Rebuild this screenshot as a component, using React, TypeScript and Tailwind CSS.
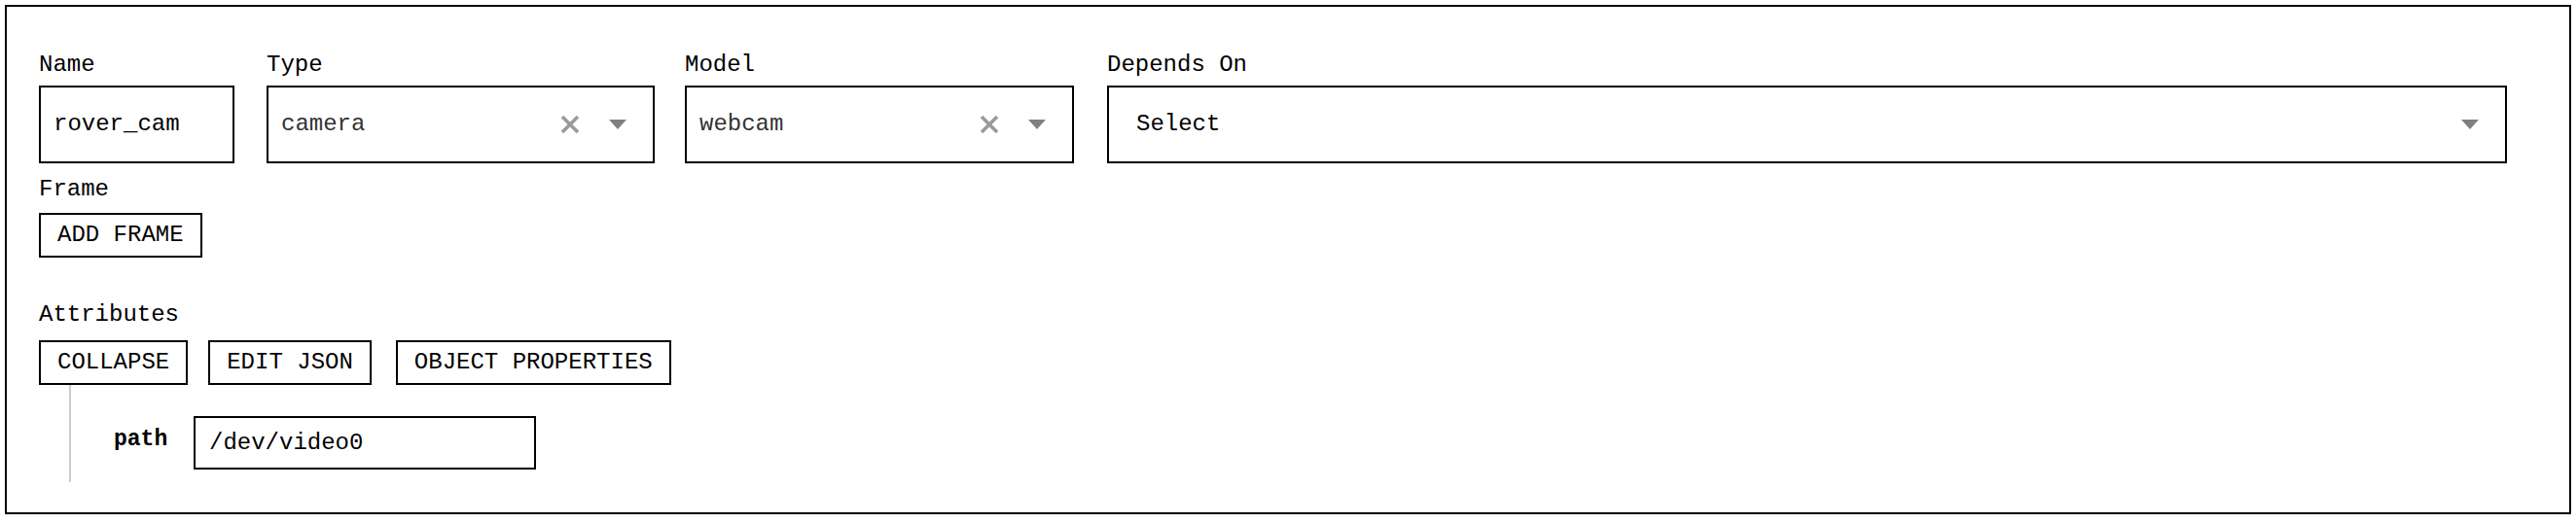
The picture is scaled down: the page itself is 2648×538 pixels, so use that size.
import React from "react";

const mono = "font-['Liberation_Mono','DejaVu_Sans_Mono',monospace]";

function ClearIcon() {
  return (
    <svg width="20" height="20" viewBox="0 0 20 20" className="shrink-0">
      <path d="M2 2 L18 18 M18 2 L2 18" stroke="#9a9a9a" strokeWidth="3.6" strokeLinecap="butt" />
    </svg>
  );
}

function Caret() {
  return (
    <svg width="18" height="10" viewBox="0 0 18 10" className="shrink-0">
      <polygon points="0,0 18,0 9,10" fill="#808080" />
    </svg>
  );
}

function Label({ children, className = "" }: { children: React.ReactNode; className?: string }) {
  return <div className={`h-[24px] leading-[24px] text-[24px] text-black ${className}`}>{children}</div>;
}

function Btn({ children, className = "" }: { children: React.ReactNode; className?: string }) {
  return (
    <button
      className={`h-[46px] border-2 border-black px-[17px] flex items-center text-[24px] leading-none text-black bg-white ${className}`}
    >
      {children}
    </button>
  );
}

function SelectBox({ value, width }: { value: string; width: string }) {
  return (
    <div className={`${width} h-[80px] border-2 border-black flex items-center pl-[13px] pr-[27px]`}>
      <span className="flex-1 text-[24px] text-[#333]">{value}</span>
      <ClearIcon />
      <span className="w-[30px]" />
      <Caret />
    </div>
  );
}

export default function App() {
  return (
    <div className={`bg-white ${mono} min-h-[538px] pt-[5px]`}>
      <div className="mx-[5px] border-2 border-black pl-[33px] pr-[64px] pt-[48px] pb-[31px]">
        <div className="flex">
          <div className="w-[201px]">
            <Label className="mb-[9px]">Name</Label>
            <div className="h-[80px] border-2 border-black flex items-center pl-[13px] text-[24px] text-black">
              rover_cam
            </div>
          </div>
          <div className="ml-[33px]">
            <Label className="mb-[9px]">Type</Label>
            <SelectBox value="camera" width="w-[399px]" />
          </div>
          <div className="ml-[31px]">
            <Label className="mb-[9px]">Model</Label>
            <SelectBox value="webcam" width="w-[400px]" />
          </div>
          <div className="ml-[34px] flex-1">
            <Label className="mb-[9px]">Depends On</Label>
            <div className="h-[80px] border-2 border-black flex items-center pl-[28px] pr-[27px]">
              <span className="flex-1 text-[24px] text-black">Select</span>
              <Caret />
            </div>
          </div>
        </div>

        <Label className="mt-[15px] mb-[12px]">Frame</Label>
        <div className="flex">
          <Btn>ADD FRAME</Btn>
        </div>

        <Label className="mt-[47px] mb-[14px]">Attributes</Label>
        <div className="flex">
          <Btn>COLLAPSE</Btn>
          <Btn className="ml-[21px]">EDIT JSON</Btn>
          <Btn className="ml-[25px]">OBJECT PROPERTIES</Btn>
        </div>

        <div className="ml-[31px] border-l-2 border-[#cccccc] h-[100px] pt-[32px] pl-[44px]">
          <div className="flex items-start">
            <div className="w-[82px] mt-[12px] text-[23px] leading-[24px] font-bold text-black">path</div>
            <div className="w-[352px] h-[55px] border-2 border-black flex items-center pl-[14px] text-[24px] text-black">
              /dev/video0
            </div>
          </div>
        </div>
      </div>
    </div>
  );
}
